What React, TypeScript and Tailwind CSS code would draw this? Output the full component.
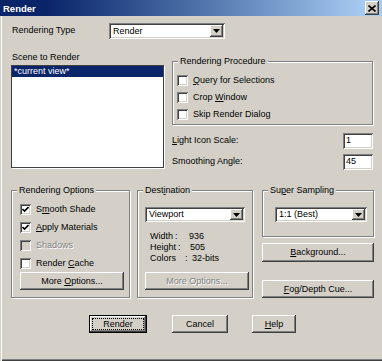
import React from "react";

const raised =
  "shadow-[inset_-1px_-1px_#404040,inset_1px_1px_#ffffff,inset_-2px_-2px_#808080,inset_2px_2px_#d4d0c8]";
const sunken =
  "shadow-[inset_1px_1px_#808080,inset_-1px_-1px_#ffffff,inset_2px_2px_#404040,inset_-2px_-2px_#d4d0c8]";
const etched = "shadow-[inset_1px_1px_#ffffff,1px_1px_#ffffff]";

function U({ children }: { children: React.ReactNode }) {
  return <span className="underline underline-offset-1">{children}</span>;
}

function Group({
  title,
  className,
  children,
}: {
  title: React.ReactNode;
  className?: string;
  children?: React.ReactNode;
}) {
  return (
    <div className={`border border-[#808080] ${etched} ${className ?? ""}`}>
      <div className="-mt-[6px] ml-[5px] h-[11px] w-fit bg-[#d4d0c8] px-[2px] leading-[11px]">
        {title}
      </div>
      {children}
    </div>
  );
}

function Check({
  label,
  checked,
  disabled,
  h = "h-[17px]",
}: {
  label: React.ReactNode;
  checked?: boolean;
  disabled?: boolean;
  h?: string;
}) {
  return (
    <div className={`flex items-center ${h}`}>
      <span
        className={`flex h-[11px] w-[11px] items-center justify-center ${sunken} ${
          disabled ? "bg-[#d4d0c8]" : "bg-white"
        }`}
      >
        {checked && (
          <svg width="7" height="7" viewBox="0 0 7 7">
            <path d="M0.5 3 L2.5 5 L6.5 1" stroke="#000" strokeWidth="1.6" fill="none" />
          </svg>
        )}
      </span>
      <span
        className={`ml-[5px] leading-[11px] ${
          disabled ? "text-[#808080] [text-shadow:1px_1px_0_#ffffff]" : ""
        }`}
      >
        {label}
      </span>
    </div>
  );
}

function Combo({ value, className }: { value: string; className: string }) {
  return (
    <div className={`flex items-center bg-white ${sunken} ${className}`}>
      <span className="flex-1 pl-[4px] leading-[11px]">{value}</span>
      <span
        className={`mr-[2px] flex h-[calc(100%-4px)] w-[13px] items-center justify-center bg-[#d4d0c8] ${raised}`}
      >
        <svg width="7" height="4" viewBox="0 0 7 4">
          <path d="M0 0 H7 L3.5 4 Z" fill="#000" />
        </svg>
      </span>
    </div>
  );
}

function Btn({
  children,
  className,
  disabled,
}: {
  children: React.ReactNode;
  className: string;
  disabled?: boolean;
}) {
  return (
    <div
      className={`flex items-center justify-center bg-[#d4d0c8] leading-[11px] ${raised} ${className} ${
        disabled ? "text-[#808080] [text-shadow:1px_1px_0_#ffffff]" : ""
      }`}
    >
      {children}
    </div>
  );
}

function Field({ value }: { value: string }) {
  return (
    <div className={`flex h-[16px] w-[30px] items-center bg-white pl-[3px] ${sunken}`}>
      {value}
    </div>
  );
}

export default function App() {
  return (
    <div className="h-[361px] w-[382px] overflow-hidden bg-[#d4d0c8] font-['Liberation_Sans',Arial,sans-serif] text-[9px] text-black shadow-[inset_1px_0_#d4d0c8,inset_2px_0_#ffffff,inset_0_-1px_#404040,inset_0_-2px_#808080]">
      {/* title bar */}
      <div className="flex h-[16px] items-center bg-linear-to-r from-[#0a246a] from-[12%] to-[#a6caf0] to-[95%] pl-[3px] pr-[3px]">
        <span className="flex-1 text-[9.5px] font-bold leading-[11px] text-white">Render</span>
        <span className={`flex h-[14px] w-[14px] items-center justify-center bg-[#d4d0c8] ${raised}`}>
          <svg width="8" height="7" viewBox="0 0 8 7">
            <path d="M0.5 0.5 L7.5 6.5 M7.5 0.5 L0.5 6.5" stroke="#000" strokeWidth="1.6" />
          </svg>
        </span>
      </div>

      <div className="pl-[11px]">
        {/* rendering type */}
        <div className="mt-[7px] flex h-[16px] items-center">
          <span className="w-[98px] pl-[1px]">Rendering Type</span>
          <Combo value="Render" className="h-[16px] w-[116px]" />
        </div>

        {/* scene + procedure */}
        <div className="mt-[13px] flex">
          <div className="w-[153px]">
            <div className="h-[11px] pl-[1px] leading-[11px]">Scene to Render</div>
            <div className="mt-[2px] h-[103px] border border-[#404040] bg-white shadow-[1px_1px_#ffffff]">
              <div className="h-[11px] bg-[#0a246a] pl-[2px] leading-[11px] text-white">*current view*</div>
            </div>
          </div>
          <div className="ml-[8px] w-[201px]">
            <Group title="Rendering Procedure" className="mt-[9px] h-[64px]">
              <div className="mt-[5px] pl-[4px]">
                <Check label={<><U>Q</U>uery for Selections</>} />
                <Check label={<>Crop <U>W</U>indow</>} />
                <Check label="Skip Render Dialog" />
              </div>
            </Group>
            <div className="mt-[8px] flex h-[16px] items-center justify-between">
              <span>
                <U>L</U>ight Icon Scale:
              </span>
              <Field value="1" />
            </div>
            <div className="mt-[5px] flex h-[16px] items-center justify-between">
              <span>Smoothing Angle:</span>
              <Field value="45" />
            </div>
          </div>
        </div>

        {/* options row */}
        <div className="mt-[20px] flex">
          <Group title="Rendering Options" className="h-[108px] w-[119px]">
            <div className="mt-[4px] pl-[8px]">
              <Check h="h-[18px]" checked label={<>S<U>m</U>ooth Shade</>} />
              <Check h="h-[18px]" checked label={<><U>A</U>pply Materials</>} />
              <Check h="h-[18px]" disabled label="Shadows" />
              <Check h="h-[18px]" label={<>Render <U>C</U>ache</>} />
              <Btn className="h-[18px] w-[104px]">
                <span>
                  More <U>O</U>ptions...
                </span>
              </Btn>
            </div>
          </Group>

          <Group title={<>Dest<U>i</U>nation</>} className="ml-[7px] h-[108px] w-[116px]">
            <Combo value="Viewport" className="ml-[7px] mt-[11px] h-[15px] w-[100px]" />
            <div className="ml-[12px] mt-[9px] leading-[11px]">
              <div className="flex">
                <span className="w-[25px]">Width</span>
                <span className="w-[14px]">:</span>
                <span>936</span>
              </div>
              <div className="flex">
                <span className="w-[28px]">Height</span>
                <span className="w-[12px]">:</span>
                <span>505</span>
              </div>
              <div className="flex">
                <span className="w-[35px]">Colors</span>
                <span className="w-[7px]">:</span>
                <span>32-bits</span>
              </div>
            </div>
            <Btn disabled className="ml-[7px] mt-[8px] h-[18px] w-[104px]">
              More Options...
            </Btn>
          </Group>

          <div className="ml-[9px] w-[112px]">
            <Group title={<>Su<U>p</U>er Sampling</>} className="h-[47px]">
              <Combo value="1:1 (Best)" className="ml-[12px] mt-[11px] h-[15px] w-[92px]" />
            </Group>
            <Btn className="mt-[6px] h-[19px] w-full">
              <span>
                <U>B</U>ackground...
              </span>
            </Btn>
            <Btn className="mt-[18px] h-[18px] w-full">
              <span>
                <U>F</U>og/Depth Cue...
              </span>
            </Btn>
          </div>
        </div>

        {/* dialog buttons */}
        <div className="mt-[17px] flex">
          <div className="ml-[78px] h-[18px] w-[58px] border border-black">
            <Btn className="h-full w-full">
              <span className="flex h-[12px] w-[52px] items-center justify-center border border-dotted border-black">
                Render
              </span>
            </Btn>
          </div>
          <Btn className="ml-[25px] h-[18px] w-[56px]">Cancel</Btn>
          <Btn className="ml-[24px] h-[18px] w-[44px]">
            <span>
              <U>H</U>elp
            </span>
          </Btn>
        </div>
      </div>
    </div>
  );
}
